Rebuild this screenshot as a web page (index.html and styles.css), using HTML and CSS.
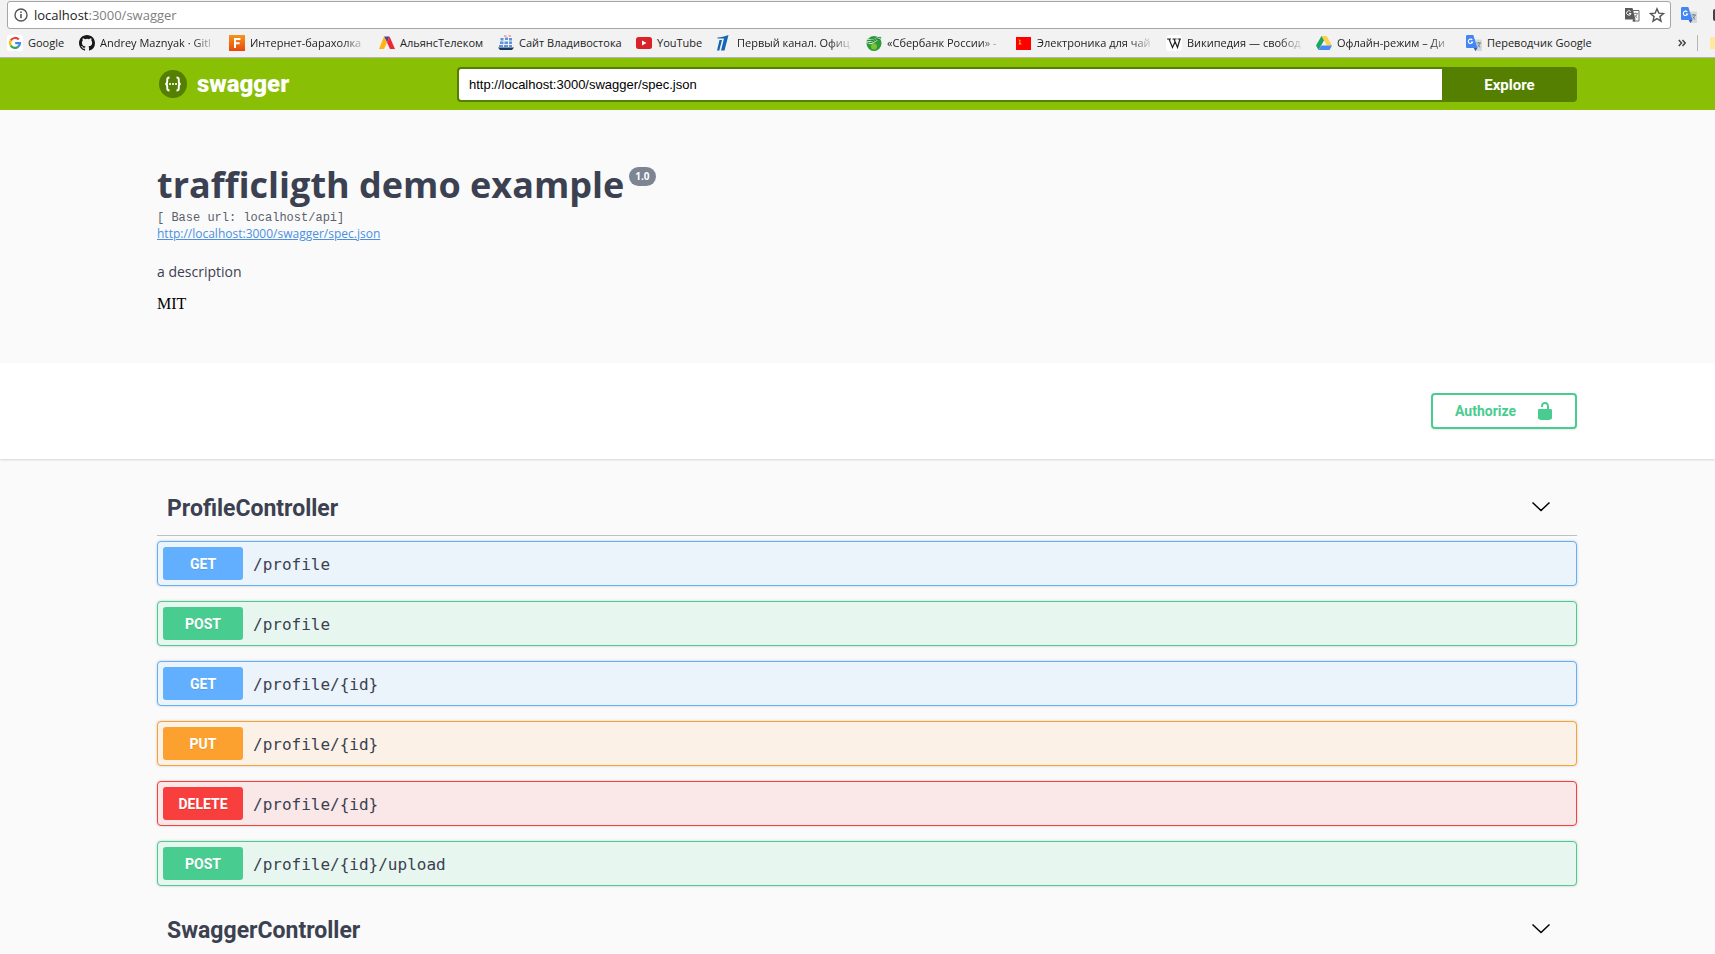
FILE: index.html
```html
<!DOCTYPE html>
<html lang="en">
<head>
<meta charset="utf-8">
<title>Swagger UI</title>
<link rel="stylesheet" href="styles.css">
</head>
<body>
<div class="browser">
  <div class="toolbar">
    <div class="address">
      <svg class="info-icon" viewBox="0 0 14 14"><circle cx="7" cy="7" r="6" fill="none" stroke="#555" stroke-width="1.4"/><path d="M7 6v4.2M7 3.4v1.5" stroke="#555" stroke-width="1.6"/></svg>
      <span class="address-text">localhost<span class="dim">:3000/swagger</span></span>
      <svg class="tool-icon" viewBox="0 0 16 16"><path d="M7 3.500h8v10.500H8.500" fill="#fff" stroke="#666"/><path d="M1 1h7.500l3 11.500H1z" fill="#5a5a5a"/><path d="M8.500 12.500h3L10 15z" fill="#444"/><path d="M6.600 4.600A2.200 2.200 0 1 0 7 6.500H5" fill="none" stroke="#fff"/><path d="M9.800 6.500h4M11.800 5.500v1M13.200 6.500c-.5 2-1.500 3.500-3 4.500M10.800 8c.6 1.400 1.500 2.400 2.500 3" fill="none" stroke="#777" stroke-width=".8"/></svg>
      <svg class="tool-icon" viewBox="0 0 16 16"><path d="M8 1.800l1.800 4.300 4.700.4-3.600 3.100 1.100 4.600L8 11.700l-4 2.500 1.100-4.600L1.500 6.500l4.700-.4z" fill="none" stroke="#555" stroke-width="1.400"/></svg>
    </div>
    <svg class="ext-icon" viewBox="0 0 16 16"><path d="M7 4.500h9V16H9z" fill="#d8d8d8"/><path d="M0 1.500C0 .7.500 0 1.300 0h6l4.200 13H1.300C.5 13 0 12.500 0 11.700z" fill="#4285f4"/><path d="M7.800 13h3.700L9.300 16z" fill="#2a56c6"/><path d="M6.300 5A2.200 2.200 0 1 0 6.600 7H4.800" fill="none" stroke="#fff" stroke-width="1.100"/><path d="M10.500 8h4.500M12.500 7v1M14 8c-.5 2-1.200 3-2.500 4M11.800 9.500c.6 1.400 1.500 2.400 2.500 3" fill="none" stroke="#607d8b" stroke-width=".9"/></svg>
    <span class="ext-edge"></span>
  </div>
  <nav class="bookmarks" aria-label="Bookmarks">
    <a class="bm w-google" href="#"><svg viewBox="0 0 16 16"><rect width="16" height="16" rx="3" fill="#fff"/><g fill="none" stroke-width="2.200"><path d="M11.800 4.600A5 5 0 0 0 3.800 5.400" stroke="#ea4335"/><path d="M3.800 5.400a5 5 0 0 0 0 5.200" stroke="#fbbc05"/><path d="M3.800 10.600a5 5 0 0 0 7.500 1.100" stroke="#34a853"/><path d="M11.300 11.700A4.700 4.700 0 0 0 13 8.100H8.200" stroke="#4285f4"/></g></svg><span>Google</span></a>
    <a class="bm fade" href="#"><svg viewBox="0 0 16 16"><path fill="#191717" d="M8 0C3.580 0 0 3.580 0 8c0 3.540 2.290 6.530 5.470 7.590.4.070.55-.17.55-.38v-1.490c-2.010.37-2.530-.49-2.690-.94-.09-.23-.48-.94-.82-1.130-.28-.15-.68-.52-.01-.53.63-.01 1.080.58 1.230.82.72 1.210 1.870.87 2.330.66.070-.52.28-.87.51-1.070-1.780-.2-3.640-.89-3.640-3.950 0-.87.31-1.590.82-2.150-.08-.2-.36-1.020.08-2.120 0 0 .67-.21 2.200.82a7.600 7.600 0 0 1 4 0c1.530-1.040 2.200-.82 2.200-.82.44 1.100.16 1.920.08 2.120.51.56.82 1.270.82 2.150 0 3.070-1.870 3.750-3.650 3.950.29.25.54.73.54 1.480v2.200c0 .21.15.46.55.38A8 8 0 0 0 16 8c0-4.420-3.580-8-8-8z"/></svg><span>Andrey Maznyak · Gitl</span></a>
    <a class="bm fade" href="#"><svg viewBox="0 0 16 16"><defs><linearGradient id="farpost" x2="0" y2="1"><stop stop-color="#f7941d"/><stop offset="1" stop-color="#e8480c"/></linearGradient></defs><rect width="16" height="16" fill="url(#farpost)"/><path d="M6 13V4h5.500M6 8.300h4.600" fill="none" stroke="#fff" stroke-width="2"/></svg><span>Интернет-барахолка</span></a>
    <a class="bm w-alliance" href="#"><svg viewBox="0 0 16 16"><path d="M5 1.500h5.500l-2.500 6z" fill="#5b3a9e"/><path d="M5 1.500L0 14h5l3-6.500z" fill="#fdb515"/><path d="M10.500 1.500L16 14h-5L8 7.500z" fill="#ee2737"/></svg><span>АльянсТелеком</span></a>
    <a class="bm w-vlad" href="#"><svg viewBox="0 0 16 16"><path d="M2.500 3h3v2.500h-3zM7 2.500h3V5H7zM11 3h3v2.500h-3zM2 6.500h3.500v2.500H2zM6.500 6.500h3.500v2.500H6.500zM11 6.500h3v2.500h-3zM1 10h4v2H1zM6 10h4v2H6zM11 10h3v2h-3z" fill="#5b93dc"/><path d="M6 1h2.500M10.500 1H13" stroke="#f26a4b"/><path d="M0 12.500h16L14 15H2z" fill="#16375e"/></svg><span>Сайт Владивостока</span></a>
    <a class="bm w-youtube" href="#"><svg viewBox="0 0 16 16"><rect y="2" width="16" height="12" rx="2.500" fill="#d8232a"/><path d="M6 5.500v5L10.500 8z" fill="#fff"/></svg><span>YouTube</span></a>
    <a class="bm fade" href="#"><svg viewBox="0 0 16 16"><path d="M12.500 0L8.500 15.500H5L8 3.500H1.500V2.500C5 2.500 8.500 1.500 12.500 0z" fill="#1565b5"/><path d="M6 5L3.300 15.500H1L3.500 5z" fill="#1565b5"/></svg><span>Первый канал. Офиц</span></a>
    <a class="bm fade" href="#"><svg viewBox="0 0 16 16"><circle cx="8" cy="8.500" r="7.500" fill="#2c9a3a"/><path d="M0 5c3-3 5 1 8-1s5-3 8-2l-1 3c-3-1-4 1-7 3S2 9 .5 8z" fill="#c4e8c4"/><path d="M1 6c3-2 4 1 7-1s5-3 7-2M1.500 8c3-1 4 0 7-2s4-2 6-1" fill="none" stroke="#17742a"/><circle cx="8" cy="11.500" r="3" fill="#7bc62d"/></svg><span>«Сбербанк России» -</span></a>
    <a class="bm fade" href="#"><svg viewBox="0 0 16 16"><path d="M0 2h15v13H0z" fill="#f00"/><path d="M2.500 4l2.500 1.500L4 7l2 2.500H2.500L3.500 7z" fill="#e8b000"/></svg><span>Электроника для чай</span></a>
    <a class="bm fade" href="#"><svg viewBox="0 0 16 16"><rect width="16" height="16" rx="3" fill="#fff"/><path d="M1 4h4M6.500 4h4M11.500 4H15M3 4l3.500 8.500L9 7M8 4l3.500 8.500L14 4" fill="none" stroke="#222" stroke-width="1.200"/></svg><span>Википедия — свобод</span></a>
    <a class="bm fade" href="#"><svg viewBox="0 0 16 16"><path d="M5.500 1h5L16 10.500h-5z" fill="#ffcf48"/><path d="M5.500 1L8 5.500 2.500 15 0 10.500z" fill="#1da462"/><path d="M5.300 10.500H16L13.500 15h-11z" fill="#4688f4"/></svg><span>Офлайн-режим – Ди</span></a>
    <a class="bm w-translate" href="#"><svg viewBox="0 0 16 16"><path d="M7 4.500h9V16H9z" fill="#d8d8d8"/><path d="M0 1.500C0 .7.500 0 1.300 0h6l4.200 13H1.300C.5 13 0 12.500 0 11.700z" fill="#4285f4"/><path d="M7.800 13h3.700L9.300 16z" fill="#2a56c6"/><path d="M6.300 5A2.200 2.200 0 1 0 6.600 7H4.800" fill="none" stroke="#fff" stroke-width="1.100"/><path d="M10.500 8h4.500M12.500 7v1M14 8c-.5 2-1.200 3-2.500 4M11.800 9.500c.6 1.400 1.500 2.400 2.500 3" fill="none" stroke="#607d8b" stroke-width=".9"/></svg><span>Переводчик Google</span></a>
    <button class="more" type="button" aria-label="More bookmarks"><svg viewBox="0 0 8 8"><path d="M.8 1l2.700 3L.8 7M4.500 1l2.700 3-2.700 3" fill="none" stroke="#444" stroke-width="1.500"/></svg></button>
    <span class="folder-edge"></span>
  </nav>
</div>

<header class="topbar">
  <div class="wrapper topbar-row">
    <a class="logo" href="#">
      <svg viewBox="0 0 28 28"><circle cx="14" cy="14" r="14" fill="#547f00"/><path d="M10.500 7.500c-2 0-2.300.8-2.300 2.300v2c0 1.400-.6 2.200-1.900 2.200 1.300 0 1.900.8 1.900 2.200v2c0 1.500.3 2.300 2.300 2.300M17.500 7.500c2 0 2.300.8 2.300 2.300v2c0 1.400.6 2.200 1.900 2.200-1.300 0-1.900.8-1.900 2.200v2c0 1.500-.3 2.300-2.300 2.300" fill="none" stroke="#fff" stroke-width="1.900"/><g fill="#fff"><circle cx="11" cy="14" r="1.100"/><circle cx="14" cy="14" r="1.100"/><circle cx="17" cy="14" r="1.100"/></g></svg>
      <span>swagger</span>
    </a>
    <form class="explore">
      <input type="text" value="http://localhost:3000/swagger/spec.json" aria-label="Spec URL">
      <button type="button">Explore</button>
    </form>
  </div>
</header>

<main>
  <section class="wrapper info">
    <h1>trafficligth demo example<span class="version">1.0</span></h1>
    <p class="base-url">[ Base url: localhost/api]</p>
    <a class="spec-link" href="#">http://localhost:3000/swagger/spec.json</a>
    <p class="description">a description</p>
    <p class="license">MIT</p>
  </section>

  <section class="schemes">
    <div class="wrapper schemes-row">
      <button class="authorize" type="button"><span>Authorize</span><svg viewBox="0 0 20 20"><path d="M15.800 8H14V5.600C14 2.703 12.665 1 10 1 7.334 1 6 2.703 6 5.600V6h2v-.801C8 3.754 8.797 3 10 3c1.203 0 2 .754 2 2.199V8H4c-.553 0-1 .646-1 1.199V17c0 .549.428 1.139.951 1.307l1.197.387C5.672 18.861 6.550 19 7.100 19h5.800c.549 0 1.428-.139 1.951-.307l1.196-.387c.524-.167.953-.757.953-1.306V9.199C17 8.646 16.352 8 15.800 8z"/></svg></button>
    </div>
  </section>

  <section class="wrapper tags">
    <div class="tag">
      <h2>ProfileController</h2>
      <button type="button" aria-label="Collapse ProfileController"><svg viewBox="0 0 20 20"><path d="M1.500 5.500L10 13.500l8.500-8" fill="none" stroke="#000" stroke-width="1.500"/></svg></button>
    </div>
    <div class="ops">
      <button class="op get" type="button"><span class="method">GET</span><span class="path">/profile</span></button>
      <button class="op post" type="button"><span class="method">POST</span><span class="path">/profile</span></button>
      <button class="op get" type="button"><span class="method">GET</span><span class="path">/profile/{id}</span></button>
      <button class="op put" type="button"><span class="method">PUT</span><span class="path">/profile/{id}</span></button>
      <button class="op delete" type="button"><span class="method">DELETE</span><span class="path">/profile/{id}</span></button>
      <button class="op post" type="button"><span class="method">POST</span><span class="path">/profile/{id}/upload</span></button>
    </div>
    <div class="tag">
      <h2>SwaggerController</h2>
      <button type="button" aria-label="Collapse SwaggerController"><svg viewBox="0 0 20 20"><path d="M1.500 5.500L10 13.500l8.500-8" fill="none" stroke="#000" stroke-width="1.500"/></svg></button>
    </div>
  </section>
</main>
</body>
</html>
```
FILE: styles.css
```css
* { box-sizing: border-box; }

html { height: 100%; overflow: hidden; }

body {
  margin: 0;
  height: 100%;
  overflow: hidden;
  background: #fafafa;
  color: #3b4151;
  font-family: "Open Sans", sans-serif;
}

h1, h2, p { margin: 0; }
button { font: inherit; cursor: pointer; }

/* Browser chrome */
.browser {
  background: #f2f2f2;
  border-bottom: 1px solid #b6b4b6;
  padding-top: 1px;
}

.toolbar { display: flex; align-items: center; padding-left: 7px; }

.address {
  flex: 1;
  display: flex;
  align-items: center;
  gap: 9px;
  height: 28px;
  padding: 0 5px 0 6px;
  background: #fff;
  border: 1px solid #a6a6a6;
  border-radius: 3px;
}

.info-icon { width: 14px; height: 14px; }
.address-text { flex: 1; margin-left: -3px; font-size: 13px; color: #222; }
.dim { color: #808080; }
.tool-icon { width: 16px; height: 16px; }
.ext-icon { width: 16px; height: 16px; margin: 0 16px 0 10px; }
.ext-edge { width: 2px; height: 12px; background: #444; border-radius: 2px 0 0 2px; }

.bookmarks { display: flex; align-items: center; height: 28px; padding-left: 7px; }

.bm {
  flex: none;
  display: flex;
  align-items: center;
  gap: 5px;
  width: 150px;
  padding-right: 12px;
  color: #222;
  font-size: 11px;
  line-height: 16px;
  text-decoration: none;
  white-space: nowrap;
}

.bm svg { flex: none; width: 16px; height: 16px; }
.bm span { flex: 1; }
.fade span { -webkit-mask-image: linear-gradient(to left, transparent, #000 24px); mask-image: linear-gradient(to left, transparent, #000 24px); }
.w-google { width: 72px; padding: 0; }
.w-alliance { width: 119px; padding: 0; }
.w-vlad { width: 138px; padding: 0; }
.w-youtube { width: 80px; padding: 0; }
.w-translate { padding: 0; }

.more { display: flex; margin-left: auto; padding: 0; border: 0; background: none; }
.more svg { width: 8px; height: 8px; }
.folder-edge {
  width: 18px;
  height: 16px;
  margin-left: 11px;
  border-left: 1px solid #b5b5b5;
  background: linear-gradient(#fde9a0, #fde9a0) right / 5px 12px no-repeat;
}

/* Page */
.wrapper {
  width: 100%;
  max-width: 1460px;
  margin: 0 auto;
  padding: 0 20px;
}

.topbar, main { padding-left: 19px; }
.topbar { background: #89bf04; }
.topbar-row { display: flex; align-items: center; height: 52px; }

.logo {
  display: flex;
  align-items: center;
  gap: 10px;
  width: 300px;
  padding-left: 2px;
  color: #fff;
  font: 900 24px/28px Roboto, sans-serif;
  text-decoration: none;
}

.logo svg { width: 28px; height: 28px; }

.explore { flex: 1; display: flex; height: 35px; }

.explore input {
  flex: 1;
  min-width: 0;
  padding: 0 10px;
  border: 2px solid #547f00;
  border-right: 0;
  border-radius: 4px 0 0 4px;
  background: #fff;
  color: #000;
  font: 13px "Liberation Sans", sans-serif;
}

.explore button {
  width: 135px;
  padding: 2px 0 0;
  border: 0;
  border-radius: 0 4px 4px 0;
  background: #547f00;
  color: #fff;
  font: 700 15px Roboto, sans-serif;
}

.info { height: 253px; padding-top: 50px; }
.info h1 { display: flex; align-items: flex-start; gap: 5px; font-size: 36px; line-height: 50px; }

.version {
  margin-top: 7px;
  padding: 0 6px;
  border-radius: 10px;
  background: #7d8492;
  color: #fff;
  font-size: 10px;
  line-height: 19px;
}

.base-url { color: #5a5f6d; font: 12px/16px "Liberation Mono", monospace; }
.spec-link { display: block; color: #4990e2; font-size: 12px; line-height: 16px; }
.description { margin-top: 12px; font-size: 14px; line-height: 36px; }
.license { color: #000; font: 16px/28px "Liberation Serif", serif; }

.schemes { margin-left: -19px; padding-left: 19px; background: #fff; box-shadow: 0 1px 2px rgba(0, 0, 0, .15); }
.schemes-row { display: flex; justify-content: flex-end; padding-top: 30px; padding-bottom: 30px; }

.authorize {
  display: flex;
  align-items: center;
  justify-content: space-between;
  width: 146px;
  height: 36px;
  padding: 0 20px 0 22px;
  border: 2px solid #49cc90;
  border-radius: 4px;
  background: transparent;
  box-shadow: 0 1px 2px rgba(0, 0, 0, .1);
  color: #49cc90;
  font: 700 14px Roboto, sans-serif;
}

.authorize svg { width: 20px; height: 20px; fill: #49cc90; }

.tags { padding-top: 20px; }

.tag {
  display: flex;
  align-items: center;
  justify-content: space-between;
  height: 57px;
  padding: 0 26px 0 10px;
  border-bottom: 1px solid #bfc0c3;
}

.tag h2 { padding-top: 3px; font: 700 23px/32px Roboto, sans-serif; }
.tag button { display: flex; padding: 0; border: 0; background: none; }
.tag svg { width: 20px; height: 20px; }

.ops { display: flex; flex-direction: column; gap: 15px; padding: 5px 0 15px; }

.op {
  display: flex;
  align-items: center;
  gap: 10px;
  width: 100%;
  height: 45px;
  padding: 0 5px;
  border: 1px solid;
  border-radius: 4px;
  box-shadow: 0 0 3px rgba(0, 0, 0, .19);
}

.method {
  width: 80px;
  padding-top: 1px;
  border-radius: 3px;
  color: #fff;
  font: 700 14px/32px Roboto, sans-serif;
  text-align: center;
  text-shadow: 0 1px 0 rgba(0, 0, 0, .1);
}

.path { padding-top: 2px; color: #3b4151; font: 16px "DejaVu Sans Mono", monospace; }

.get { border-color: #61affe; background: #ebf3fb; }
.get .method { background: #61affe; }
.post { border-color: #49cc90; background: #e8f6f0; }
.post .method { background: #49cc90; }
.put { border-color: #fca130; background: #fbf1e6; }
.put .method { background: #fca130; }
.delete { border-color: #f93e3e; background: #fae7e7; }
.delete .method { background: #f93e3e; }
```
